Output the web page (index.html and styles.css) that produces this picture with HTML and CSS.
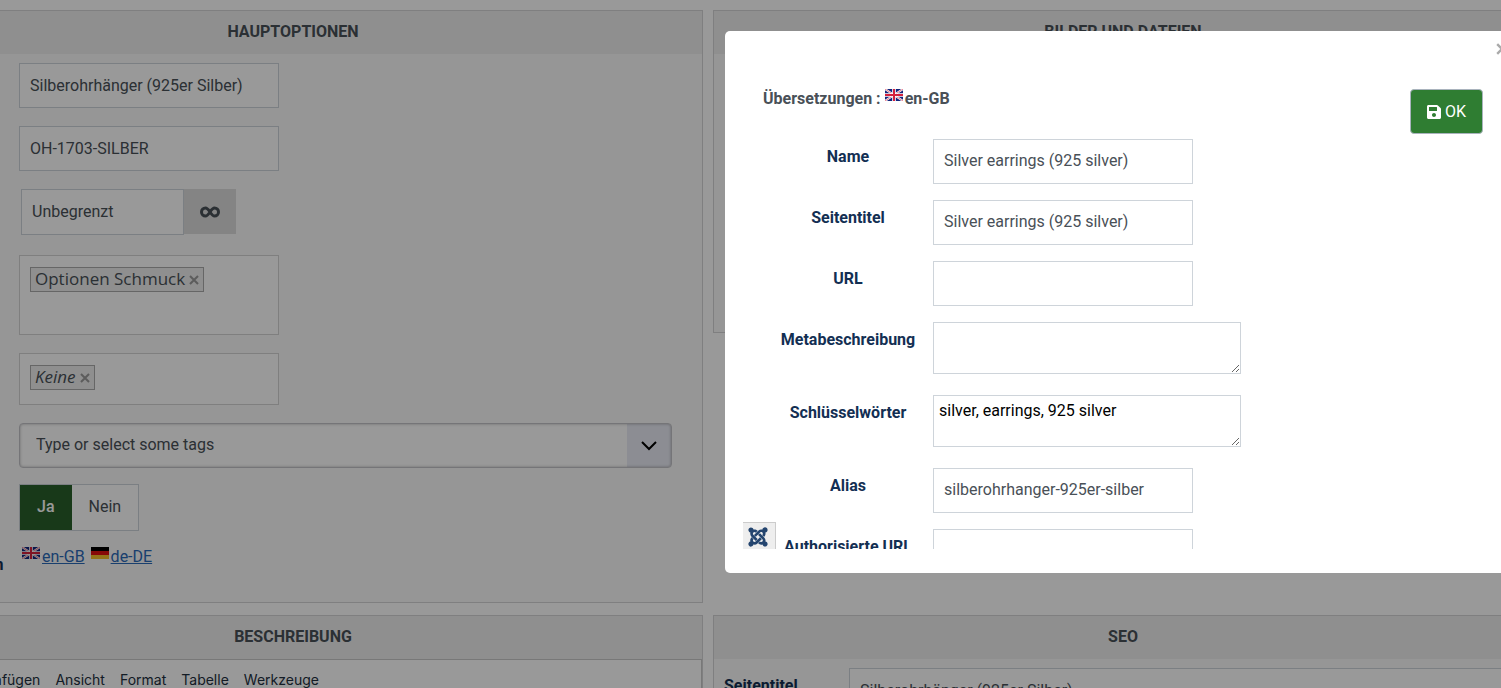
FILE: index.html
```
<!DOCTYPE html>
<html lang="de">
<head>
<meta charset="UTF-8">
<meta name="viewport" content="width=device-width, initial-scale=1.0">
<title>Produkt bearbeiten</title>
<link rel="stylesheet" href="styles.css">
</head>
<body>

<!-- shared icons -->
<svg class="sprite" aria-hidden="true">
    <symbol id="flag-gb" viewBox="0 0 18 12">
        <rect width="18" height="12" fill="#12247c"/>
        <path d="M0 0L18 12M18 0L0 12" stroke="#fff" stroke-width="2"/>
        <path d="M0 0L18 12M18 0L0 12" stroke="#d8405a" stroke-width=".7"/>
        <path d="M9 0V12M0 6H18" stroke="#fff" stroke-width="3.600"/>
        <path d="M9 0V12M0 6H18" stroke="#d4213d" stroke-width="2"/>
    </symbol>
    <symbol id="flag-de" viewBox="0 0 18 12">
        <rect width="18" height="4" fill="#000"/>
        <rect y="4" width="18" height="4" fill="#e01010"/>
        <rect y="8" width="18" height="4" fill="#f5c02c"/>
    </symbol>
    <symbol id="cross" viewBox="0 0 10 10">
        <path d="M1 1L9 9M9 1L1 9" stroke="currentColor" stroke-width="2"/>
    </symbol>
</svg>

<main class="page">
    <section class="panel">
        <h2 class="panel-title">HAUPTOPTIONEN</h2>
        <form class="options">
            <div class="row">
                <label for="name">Name</label>
                <input type="text" id="name" class="field" value="Silberohrhänger (925er Silber)">
            </div>
            <div class="row">
                <label for="code">Code</label>
                <input type="text" id="code" class="field" value="OH-1703-SILBER">
            </div>
            <div class="row row-stock">
                <label for="stock">Bestand</label>
                <div class="stock">
                    <input type="text" id="stock" class="field" value="Unbegrenzt">
                    <button type="button" class="stock-button" aria-label="Unbegrenzt">
                        <svg width="20" height="12" viewBox="0 0 20 12" fill="none" stroke="currentColor" stroke-width="3"><path d="M10 6C8 3 7 2 5.500 2A4 4 0 0 0 5.500 10C7 10 8 9 10 6S13 2 14.500 2A4 4 0 0 1 14.500 10C13 10 12 9 10 6Z"/></svg>
                    </button>
                </div>
            </div>
            <div class="row">
                <span class="row-label">Kategorie</span>
                <div class="chips chips-tall">
                    <span class="chip">Optionen Schmuck <button type="button" class="chip-close" aria-label="Entfernen"><svg width="10" height="10"><use href="#cross"/></svg></button></span>
                </div>
            </div>
            <div class="row">
                <span class="row-label">Marke</span>
                <div class="chips">
                    <span class="chip"><em>Keine</em> <button type="button" class="chip-close" aria-label="Entfernen"><svg width="10" height="10"><use href="#cross"/></svg></button></span>
                </div>
            </div>
            <div class="row row-tags">
                <label for="tags">Tags</label>
                <div class="tags">
                    <select id="tags">
                        <option>Type or select some tags</option>
                    </select>
                    <svg class="tags-arrow" width="16" height="10" viewBox="0 0 16 10" fill="none" stroke="#000" stroke-width="2"><path d="M1 1L8 8L15 1"/></svg>
                </div>
            </div>
            <div class="row row-active">
                <span class="row-label">Aktiv</span>
                <div class="switch">
                    <input type="radio" name="published" id="yes" checked>
                    <label for="yes">Ja</label>
                    <input type="radio" name="published" id="no">
                    <label for="no">Nein</label>
                </div>
            </div>
            <div class="row row-languages">
                <span class="row-label">Übersetzungen</span>
                <div class="languages">
                    <a href="#en"><svg class="flag"><use href="#flag-gb"/></svg><span>en-GB</span></a>
                    <a href="#de"><svg class="flag"><use href="#flag-de"/></svg><span>de-DE</span></a>
                </div>
            </div>
        </form>
    </section>

    <section class="panel panel-files">
        <h2 class="panel-title">BILDER UND DATEIEN</h2>
    </section>

    <section class="panel">
        <h2 class="panel-title">BESCHREIBUNG</h2>
        <div class="editor">
            <div class="editor-menu">
                <button type="button">Bearbeiten</button>
                <button type="button">Einfügen</button>
                <button type="button">Ansicht</button>
                <button type="button">Format</button>
                <button type="button">Tabelle</button>
                <button type="button">Werkzeuge</button>
            </div>
        </div>
    </section>

    <section class="panel">
        <h2 class="panel-title">SEO</h2>
        <div class="seo">
            <label for="page-title">Seitentitel</label>
            <input type="text" id="page-title" class="field" value="Silberohrhänger (925er Silber)">
        </div>
    </section>
</main>

<div class="backdrop"></div>

<div class="modal" role="dialog" aria-label="Übersetzungen">
    <button type="button" class="modal-close" aria-label="Schließen"><svg width="12" height="12"><use href="#cross"/></svg></button>
    <div class="modal-body">
        <div class="modal-head">
            <h3>Übersetzungen : <svg class="flag"><use href="#flag-gb"/></svg><span>en-GB</span></h3>
            <button type="button" class="ok-button">
                <svg width="14" height="16" viewBox="0 0 448 512" fill="currentColor"><path d="M433.941 129.941l-83.882-83.882A48 48 0 0 0 316.118 32H48C21.490 32 0 53.490 0 80v352c0 26.510 21.490 48 48 48h352c26.510 0 48-21.490 48-48V163.882a48 48 0 0 0-14.059-33.941zM224 416c-35.346 0-64-28.654-64-64 0-35.346 28.654-64 64-64s64 28.654 64 64c0 35.346-28.654 64-64 64zm96-304.520V212c0 6.627-5.373 12-12 12H76c-6.627 0-12-5.373-12-12V108c0-6.627 5.373-12 12-12h228.520c3.183 0 6.235 1.264 8.485 3.515l3.480 3.480A11.996 11.996 0 0 1 320 111.480z"/></svg>
                OK
            </button>
        </div>
        <form class="translation">
            <label for="t-name">Name</label>
            <input type="text" id="t-name" class="field" value="Silver earrings (925 silver)">
            <label for="t-title">Seitentitel</label>
            <input type="text" id="t-title" class="field" value="Silver earrings (925 silver)">
            <label for="t-url">URL</label>
            <input type="text" id="t-url" class="field">
            <label for="t-meta">Metabeschreibung</label>
            <textarea id="t-meta"></textarea>
            <label for="t-keywords">Schlüsselwörter</label>
            <textarea id="t-keywords">silver, earrings, 925 silver</textarea>
            <label for="t-alias">Alias</label>
            <input type="text" id="t-alias" class="field" value="silberohrhanger-925er-silber">
            <label for="t-canonical">Authorisierte URL</label>
            <input type="text" id="t-canonical" class="field">
        </form>
        <div class="debug-tab">
            <svg width="20" height="22" viewBox="0 0 448 512" fill="#24456f"><path d="M.6 92.100C.6 58.800 27.400 32 60.400 32c30 0 54.500 21.900 59.200 50.200 32.600-7.600 67.100.6 96.500 30l-44.300 44.300c-20.500-20.500-42.600-16.300-55.400-3.500-14.300 14.300-14.300 37.900 0 52.200l99.500 99.500-44 44.300c-87.700-87.200-49.700-49.700-99.800-99.700-26.800-26.500-35-64.800-24.800-98.900C20.400 144.600.6 120.700.6 92.100zm129.500 116.400l44.300 44.300c10-10 89.700-89.700 99.700-99.800 14.300-14.300 37.600-14.300 51.900 0 12.800 12.800 17 35-3.500 55.400l44 44.300c31.200-31.200 38.500-67.600 28.900-101.200 29.200-4.100 51.900-29.200 51.900-59.500 0-33.200-26.800-60.100-59.800-60.100-30.300 0-55.400 22.500-59.500 51.600-33.800-9.900-71.700-1.500-98.300 25.100-18.300 19.100-71.100 71.500-99.600 99.900zm266.300 152.200c8.200-32.700-.9-68.500-26.300-93.900-11.800-12.200 5 4.700-99.500-99.700l-44.300 44.300 99.700 99.700c14.300 14.300 14.300 37.600 0 51.900-12.800 12.800-35 17-55.400-3.500l-44 44.300c27.600 30.200 68 38.800 102.700 28 5.500 27.400 29.700 48.100 58.900 48.100 33 0 59.800-26.800 59.800-60.100 0-30.200-22.500-55-51.600-59.100zm-84.300-53.100l-44-44.300c-87 86.400-50.400 50.400-99.700 99.800-14.300 14.300-37.600 14.300-51.900 0-13.100-13.400-16.900-35.300 3.200-55.400l-44-44.300c-30.200 30.200-38 65.200-29.500 98.300-26.700 6-46.200 29.900-46.200 58.200C0 453.200 26.800 480 59.800 480c28.600 0 52.500-19.800 58.600-46.700 32.700 8.200 68.500-.6 94.200-26 32.100-32.200 71.100-71.100 99.500-99.700z"/></svg>
        </div>
    </div>
</div>

</body>
</html>
```
FILE: styles.css
```
* {
    box-sizing: border-box;
}

body {
    margin: 0;
    height: 100vh;
    overflow: hidden;
    background-color: #fff;
    color: #495057;
    font-family: Roboto, sans-serif;
    font-size: 16px;
    line-height: 20px;
}

button,
input,
select,
textarea {
    font: inherit;
    color: inherit;
}

button {
    padding: 0;
    border: none;
    background: none;
    cursor: pointer;
}

svg {
    display: block;
}

.sprite {
    position: absolute;
    width: 0;
    height: 0;
}

/* the form is wider than the window and runs out on both sides */
.page {
    display: grid;
    grid-template-columns: 1fr 1fr;
    gap: 12px 10px;
    align-items: start;
    margin: 0 -32px 0 -117px;
    padding-top: 10px;
}

.panel {
    border: 1px solid #d4d4d6;
    background-color: #fafafa;
}

.panel-files {
    min-height: 323px;
}

.panel-title {
    margin: 0;
    padding: 11px 0 12px;
    background-color: #eee;
    font-size: 16px;
    font-weight: 700;
    text-align: center;
}

.field {
    width: 260px;
    height: 45px;
    padding: 0 10px;
    border: 1px solid #ced4da;
    border-radius: 0;
    background-color: #fff;
}

.flag {
    width: 18px;
    height: 12px;
}

/* main options */
.options {
    padding: 9px 30px 25px 0;
}

.row {
    display: grid;
    grid-template-columns: 130px 1fr;
    column-gap: 5px;
    margin-bottom: 18px;
}

.row > label,
.row-label {
    padding-top: 8px;
    color: #132f53;
    font-weight: 700;
    text-align: center;
}

.row-stock {
    margin-bottom: 20px;
}

.stock {
    display: flex;
    padding-left: 2px;
}

.stock .field {
    width: 163px;
    height: 46px;
    padding-bottom: 2px;
}

.stock-button {
    display: flex;
    align-items: center;
    justify-content: center;
    width: 52px;
    height: 45px;
    background-color: #dcdcdc;
}

.chips {
    display: flex;
    align-items: flex-start;
    width: 260px;
    min-height: 52px;
    padding: 11px 10px;
    border: 1px solid #d4d4d4;
    background-color: #fff;
}

.chips-tall {
    min-height: 80px;
}

.chip {
    display: flex;
    align-items: center;
    gap: 4px;
    height: 25px;
    padding: 0 4px 2px;
    border: 1px solid #aaa;
    background-color: #eee;
    font-family: "Open Sans", sans-serif;
    font-size: 17px;
}

.chip-close {
    padding-top: 2px;
    color: #999;
}

.row-tags,
.row-active {
    margin-bottom: 16px;
}

.tags {
    display: grid;
    align-items: center;
}

.tags select,
.tags-arrow {
    grid-area: 1 / 1;
}

.tags select {
    width: 100%;
    height: 45px;
    padding: 0 60px 2px 16px;
    appearance: none;
    border: 1px solid #c4c4c8;
    border-radius: 4px;
    background: linear-gradient(to left, #eaecf5 44px, #fff 44px);
    box-shadow: inset 0 0 3px rgba(0, 0, 0, 0.3);
}

.tags-arrow {
    justify-self: end;
    margin-right: 15px;
    pointer-events: none;
}

.switch {
    display: flex;
    justify-self: start;
    border: 1px solid #ced4da;
    background-color: #fff;
}

.switch input {
    position: absolute;
    opacity: 0;
}

.switch label {
    padding: 12px 17px 13px;
}

.switch input:checked + label {
    background-color: #28602b;
    color: #fff;
    font-weight: 500;
}

.row-languages {
    margin-bottom: 0;
    padding-bottom: 2px;
    align-items: start;
}

.languages {
    display: flex;
    gap: 6px;
    padding-left: 3px;
}

.languages a {
    display: flex;
    gap: 2px;
    color: #2a69b8;
    text-decoration: none;
}

.languages span {
    text-decoration: underline;
}

/* description */
.editor {
    min-height: 200px;
    border: 1px solid #c8c8c8;
    background-color: #fff;
}

.editor-menu {
    display: flex;
    gap: 15px;
    padding: 10px;
    color: #222f3e;
    font-family: Inter, sans-serif;
    font-size: 14px;
}

/* seo */
.seo {
    display: grid;
    grid-template-columns: 125px 1fr;
    padding: 9px 10px;
}

.seo label {
    padding-top: 8px;
    color: #132f53;
    font-weight: 700;
}

.seo .field {
    width: 100%;
}

/* modal */
.backdrop {
    position: fixed;
    inset: 0;
    background-color: rgba(0, 0, 0, 0.4);
}

.modal {
    position: fixed;
    top: 31px;
    right: -20px;
    bottom: 115px;
    left: 725px;
    display: flex;
    padding: 24px 0;
    border-radius: 5px;
    background-color: #fff;
}

.modal-close {
    position: absolute;
    top: 12px;
    right: 13px;
    color: #aaa;
}

.modal-body {
    position: relative;
    flex: 1;
    padding: 34px 38px 0;
    overflow: hidden;
}

.modal-head {
    display: flex;
    justify-content: space-between;
    align-items: flex-start;
    margin-bottom: 5px;
}

.modal-head h3 {
    display: flex;
    margin: 0;
    font-size: 16px;
    font-weight: 700;
}

.modal-head .flag {
    margin: 0 2px 0 4px;
}

.ok-button {
    display: flex;
    align-items: center;
    gap: 4px;
    height: 45px;
    padding: 0 16px;
    border: 1px solid #a9b3bd;
    border-radius: 4px;
    background-color: #2f7d32;
    color: #fff;
}

.translation {
    display: grid;
    grid-template-columns: 170px 1fr;
    row-gap: 16px;
    align-items: start;
}

.translation label {
    padding-top: 8px;
    color: #132f53;
    font-weight: 700;
    text-align: center;
}

.translation .field {
    padding-bottom: 2px;
}

.translation textarea {
    width: 308px;
    height: 52px;
    margin-bottom: 5px;
    padding: 5px;
    border: 1px solid #ced4da;
    background-color: #fff;
    color: #000;
}

.debug-tab {
    position: absolute;
    bottom: 0;
    left: 18px;
    display: flex;
    justify-content: center;
    width: 33px;
    height: 27px;
    padding: 3px 2px 0 0;
    border-top: 1px solid #ccc;
    border-right: 1px solid #ccc;
    background-color: #eee;
}
```
